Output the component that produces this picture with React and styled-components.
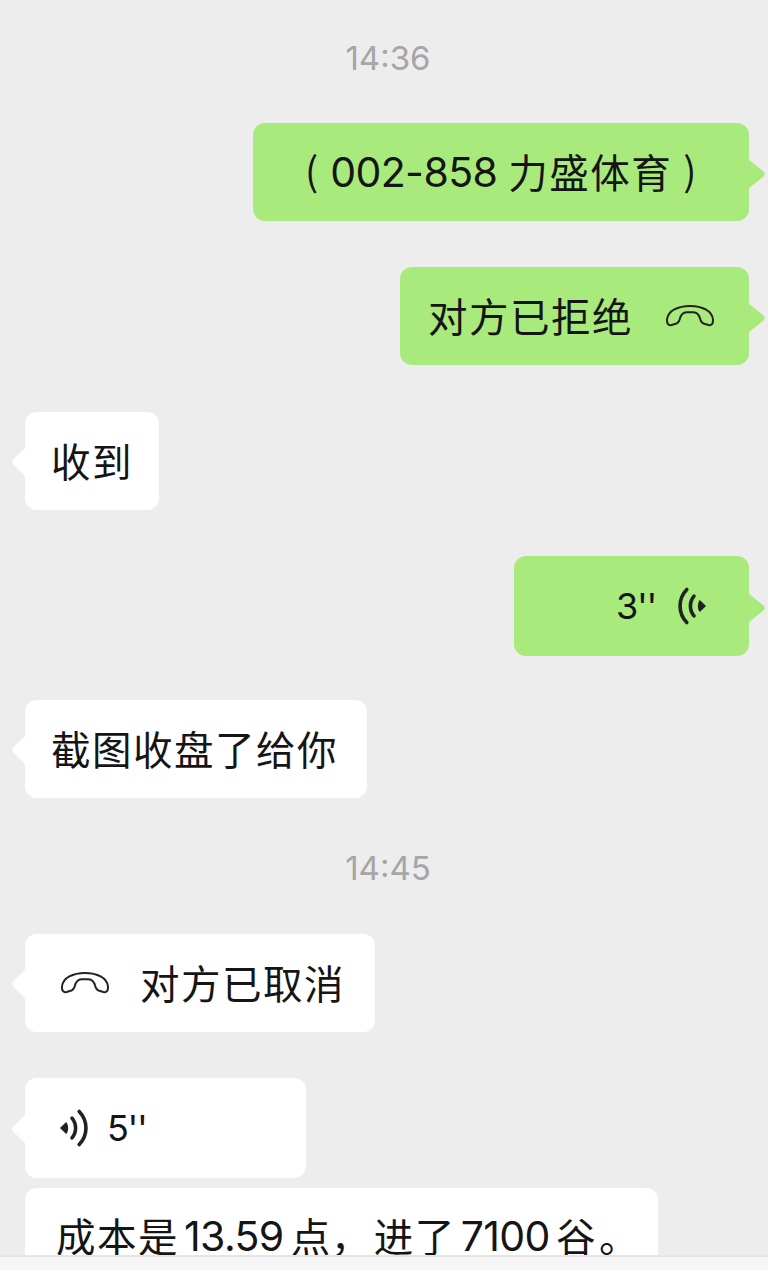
import React from "react";
import styled, { createGlobalStyle, css } from "styled-components";

const PhoneIcon = () => (
  <svg width="50" height="24" viewBox="0 0 50 24" fill="none">
    <path
      d="M2 15.500C3 6.800 13 2 25 2s22 4.800 23 13.500c.3 4-1.500 6.300-4.500 5.500l-5-1.500c-1.800-.6-2.500-1.900-3.200-4.200C33.900 10 32 8.300 28.500 8.300h-7c-3.500 0-5.400 1.700-6.800 7-.7 2.300-1.400 3.600-3.200 4.200l-5 1.500c-3 .8-4.800-1.500-4.500-5.500z"
      stroke="currentColor"
      strokeWidth="2"
      strokeLinejoin="round"
    />
  </svg>
);

const VoiceIcon = () => (
  <svg width="30" height="40" viewBox="0 0 30 40" fill="none">
    <path d="M1 20 6.200 15Q8.600 20 6.200 25Z" fill="currentColor" stroke="currentColor" strokeWidth="1.600" strokeLinejoin="round" />
    <path
      d="M12 10.200C16.800 15.800 16.800 24.200 12 29.800M19.200 3.500C28.200 12.800 28.200 27.200 19.200 36.500"
      stroke="currentColor"
      strokeWidth="3.600"
      strokeLinecap="round"
    />
  </svg>
);

const App = () => {
  return (
    <>
      <GlobalStyle />
      <Chat>
        <Messages>
          <Time>14:36</Time>
          <Row $mine $gap={45}>
            <Bubble $mine $width={496}>
              <Bracket $left={52}>(</Bracket>
              <Digits $left={12}>002-858</Digits>
              <Text $left={11}>力盛体育</Text>
              <Bracket $left={11}>)</Bracket>
            </Bubble>
          </Row>
          <Row $mine>
            <Bubble $mine $width={349}>
              <Text $left={28}>对方已拒绝</Text>
              <Icon $left={32}>
                <PhoneIcon />
              </Icon>
            </Bubble>
          </Row>
          <Row $gap={47}>
            <Bubble $width={134}>
              <Text $left={26}>收到</Text>
            </Bubble>
          </Row>
          <Row $mine>
            <Bubble $mine $width={235} $height={100}>
              <Seconds $left={102}>3''</Seconds>
              <Icon $left={20} $flip>
                <VoiceIcon />
              </Icon>
            </Bubble>
          </Row>
          <Row $gap={44}>
            <Bubble $width={342}>
              <Text $left={26}>截图收盘了给你</Text>
            </Bubble>
          </Row>
          <Time $second>14:45</Time>
          <Row>
            <Bubble $width={350}>
              <Icon $left={35}>
                <PhoneIcon />
              </Icon>
              <Text $left={30}>对方已取消</Text>
            </Bubble>
          </Row>
          <Row>
            <Bubble $width={281} $height={100}>
              <Icon $left={35}>
                <VoiceIcon />
              </Icon>
              <Seconds $left={17}>5''</Seconds>
            </Bubble>
          </Row>
          <Row $gap={10}>
            <Bubble $width={633} $height={96} $noTail>
              <Text $left={31}>成本是</Text>
              <Digits $left={5}>13.59</Digits>
              <Text $left={7}>点</Text>
              <Text $left={-1}>，</Text>
              <Text $left={2}>进了</Text>
              <Digits $left={5}>7100</Digits>
              <Text $left={6}>谷</Text>
              <Text $left={2}>。</Text>
            </Bubble>
          </Row>
        </Messages>
        <Footer />
      </Chat>
    </>
  );
};

const GlobalStyle = createGlobalStyle`
  * {
    box-sizing: border-box;
  }

  body {
    margin: 0;
    background: #ededed;
  }
`;

const Chat = styled.main`
  display: flex;
  flex-direction: column;
  width: 768px;
  height: 1270px;
  overflow: hidden;
  background: #ededed;
  color: #151515;
  font-family: "Inter", "Noto Sans CJK SC", sans-serif;
`;

const Messages = styled.section`
  display: flex;
  flex-direction: column;
  height: 1255px;
  flex-shrink: 0;
  overflow: hidden;
  padding: 38px 19px 0 25px;
`;

const Time = styled.time`
  flex-shrink: 0;
  height: 40px;
  margin-top: ${({ $second }) => ($second ? "50px" : "0")};
  padding-left: 2px;
  text-align: center;
  color: #a6a6a6;
  font-size: 33px;
  line-height: 40px;
`;

const Row = styled.div`
  display: flex;
  flex-shrink: 0;
  justify-content: ${({ $mine }) => ($mine ? "flex-end" : "flex-start")};
  margin-top: ${({ $gap = 46 }) => $gap}px;
`;

const Bubble = styled.div`
  position: relative;
  display: flex;
  align-items: center;
  width: ${({ $width }) => $width}px;
  height: ${({ $height = 98 }) => $height}px;
  border-radius: 12px;
  background: ${({ $mine }) => ($mine ? "#a8eb7c" : "#fff")};
  white-space: nowrap;

  ${({ $noTail, $mine }) =>
    !$noTail &&
    css`
      &::after {
        content: "";
        position: absolute;
        top: 50%;
        ${$mine ? "right: -16px" : "left: -13px"};
        width: ${$mine ? 17 : 14}px;
        height: 30px;
        margin-top: ${$mine ? -13 : -14}px;
        background: inherit;
        clip-path: ${$mine
          ? "polygon(0 0, 90% 41%, 100% 50%, 90% 59%, 0 100%)"
          : "polygon(100% 0, 10% 41%, 0 50%, 10% 59%, 100% 100%)"};
      }
    `}
`;

const Text = styled.span`
  margin-left: ${({ $left }) => $left}px;
  padding-bottom: 3px;
  font-family: "Noto Sans CJK SC", sans-serif;
  font-size: 39.500px;
  letter-spacing: 1.500px;
  line-height: 58px;
`;

const Digits = styled.span`
  margin-left: ${({ $left }) => $left}px;
  font-size: 41px;
  letter-spacing: -0.600px;
  line-height: 58px;
`;

const Bracket = styled.span`
  margin-left: ${({ $left }) => $left}px;
  padding-bottom: 6px;
  font-family: "Noto Sans CJK SC", sans-serif;
  font-size: 39px;
  line-height: 58px;
`;

const Seconds = styled.span`
  margin-left: ${({ $left }) => $left}px;
  font-size: 36px;
  letter-spacing: -1.300px;
  line-height: 50px;
`;

const Icon = styled.span`
  display: flex;
  margin-left: ${({ $left }) => $left}px;
  transform: ${({ $flip }) => ($flip ? "scaleX(-1)" : "none")};
  color: #222;
`;

const Footer = styled.footer`
  height: 15px;
  border-top: 2px solid #e6e6e6;
  background: #f6f6f6;
`;

export default App;
